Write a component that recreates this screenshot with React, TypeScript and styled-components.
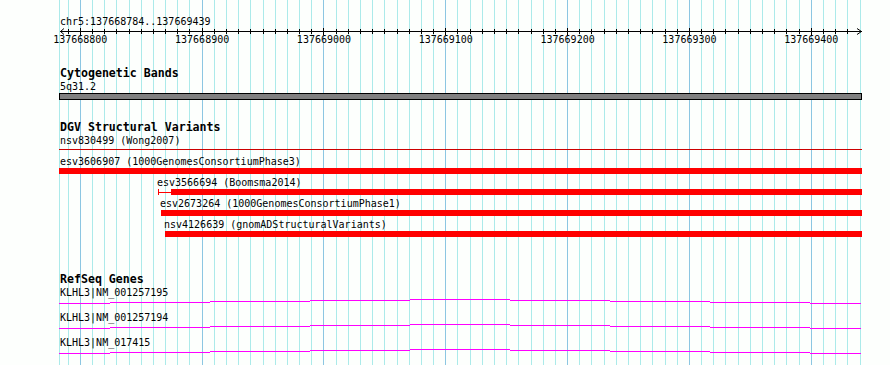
import styled, { createGlobalStyle } from 'styled-components';

const GlobalStyle = createGlobalStyle`
  body {
    margin: 0;
    background: #fdfffd;
  }
`;

const MONO = `"DejaVu Sans Mono", "Liberation Mono", monospace`;

// bp -> pixel, measured off the grid
const START = 137668800;
const toX = (pos: number) => 80.3 + (pos - START) * 1.2183;

const Panel = styled.div`
  position: relative;
  width: 890px;
  height: 365px;
  overflow: hidden;
  font-family: ${MONO};
  color: #000;
`;

const GridLayer = styled.svg`
  position: absolute;
  inset: 0;
  z-index: 0;
`;

const Tracks = styled.div`
  position: relative;
  z-index: 1;
  display: flex;
  flex-direction: column;
`;

const PositionLabel = styled.div`
  margin-top: 15px;
  padding-left: 60px;
  font-size: 10px;
  line-height: 13px;
  height: 13px;
`;

const Scale = styled.svg`
  display: block;
  width: 890px;
  height: 20px;
`;

const Track = styled.section<{ $gap: number }>`
  margin-top: ${p => p.$gap}px;
  display: flex;
  flex-direction: column;
`;

const TrackTitle = styled.h2`
  margin: 0;
  padding-left: 60px;
  font-family: ${MONO};
  font-weight: bold;
  font-size: 11.6px;
  line-height: 13px;
  height: 13px;
  letter-spacing: 0;
`;

const Label = styled.div<{ $x?: number }>`
  padding-left: ${p => p.$x ?? 60}px;
  font-size: 10px;
  line-height: 13px;
  height: 13px;
  white-space: nowrap;
`;

const BandBar = styled.div`
  margin-left: 59px;
  width: 803px;
  height: 7px;
  box-sizing: border-box;
  border: 1px solid #000;
  background: #808080;
`;

const Rule = styled.div`
  margin: 2px 0 0 59px;
  width: 803px;
  height: 1px;
  background: #cc0000;
`;

const VariantList = styled.div`
  display: flex;
  flex-direction: column;
  gap: 2px;
  padding-top: 5px;
`;

const BarRow = styled.div<{ $x: number }>`
  display: flex;
  align-items: center;
  height: 6px;
  width: 862px;
  box-sizing: border-box;
  padding-left: ${p => p.$x}px;
`;

const Cap = styled.span`
  width: 1px;
  height: 6px;
  background: #ff0000;
`;

const Stem = styled.span<{ $w: number }>`
  width: ${p => p.$w}px;
  height: 1px;
  background: #ff0000;
`;

const Bar = styled.span`
  flex: 1;
  height: 6px;
  background: #ff0000;
`;

const Wave = styled.svg`
  display: block;
  width: 890px;
  height: 12px;
`;

const variants = [
  { label: 'esv3606907 (1000GenomesConsortiumPhase3)', labelX: 60, start: 59 },
  { label: 'esv3566694 (Boomsma2014)', labelX: 157, start: 158, stem: 12 },
  { label: 'esv2673264 (1000GenomesConsortiumPhase1)', labelX: 160, start: 161 },
  { label: 'nsv4126639 (gnomADStructuralVariants)', labelX: 164, start: 165 },
];

const genes = ['KLHL3|NM_001257195', 'KLHL3|NM_001257194', 'KLHL3|NM_017415'];

// step heights of the gene line, one per 100px
const steps: [number, number, number][] = [
  [59, 110, 4], [110, 210, 3], [210, 310, 2], [310, 410, 1], [410, 510, 0],
  [510, 610, 1], [610, 710, 2], [710, 810, 3], [810, 861, 4],
];

const gridPositions: number[] = [];
for (let p = 137668790; p <= 137669440; p += 10) gridPositions.push(p);

const Grid = () => (
  <GridLayer width={890} height={365}>
    <rect x={59} y={0} width={1} height={365} fill="#abeaea" />
    {gridPositions.map(p => (
      <rect
        key={p}
        x={Math.floor(toX(p))}
        y={0}
        width={1}
        height={365}
        fill={p % 100 === 0 ? '#8cc6e2' : '#abeaea'}
      />
    ))}
  </GridLayer>
);

const Ruler = () => (
  <Scale width={890} height={20}>
    <rect x={60} y={3} width={802} height={1} fill="#000" />
    <polyline points="64,0.5 60.5,3.5 64,6.5" fill="none" stroke="#000" strokeWidth={1} />
    <polyline points="857,0.5 861.5,3.5 857,6.5" fill="none" stroke="#000" strokeWidth={1} />
    {gridPositions.filter(p => p < 137669440).map(p => {
      const major = p % 100 === 0;
      return (
        <rect
          key={p}
          x={Math.floor(toX(p))}
          y={major ? 0 : 1}
          width={1}
          height={major ? 7 : 5}
          fill="#000"
        />
      );
    })}
    {gridPositions.filter(p => p % 100 === 0).map(p => (
      <text
        key={p}
        x={toX(p)}
        y={15}
        textAnchor="middle"
        fontFamily={MONO}
        fontSize={10}
        fill="#000"
      >
        {p}
      </text>
    ))}
  </Scale>
);

const GeneLine = () => (
  <Wave width={890} height={12}>
    {steps.map(([a, b, y]) => (
      <rect key={a} x={a} y={y} width={b - a} height={1} fill="#ff00ff" />
    ))}
  </Wave>
);

const App = () => {
  return (
    <Panel>
      <GlobalStyle />
      <Grid />
      <Tracks>
        <PositionLabel>chr5:137668784..137669439</PositionLabel>
        <Ruler />

        <Track $gap={19}>
          <TrackTitle>Cytogenetic Bands</TrackTitle>
          <Label>5q31.2</Label>
          <BandBar />
        </Track>

        <Track $gap={21}>
          <TrackTitle>DGV Structural Variants</TrackTitle>
          <Label>nsv830499 (Wong2007)</Label>
          <Rule />
          <VariantList>
            {variants.map(v => (
              <div key={v.label}>
                <Label $x={v.labelX}>{v.label}</Label>
                <BarRow $x={v.start}>
                  {v.stem && <Cap />}
                  {v.stem && <Stem $w={v.stem} />}
                  <Bar />
                </BarRow>
              </div>
            ))}
          </VariantList>
        </Track>

        <Track $gap={36}>
          <TrackTitle>RefSeq Genes</TrackTitle>
          {genes.map(g => (
            <div key={g}>
              <Label>{g}</Label>
              <GeneLine />
            </div>
          ))}
        </Track>
      </Tracks>
    </Panel>
  );
};

export default App;
